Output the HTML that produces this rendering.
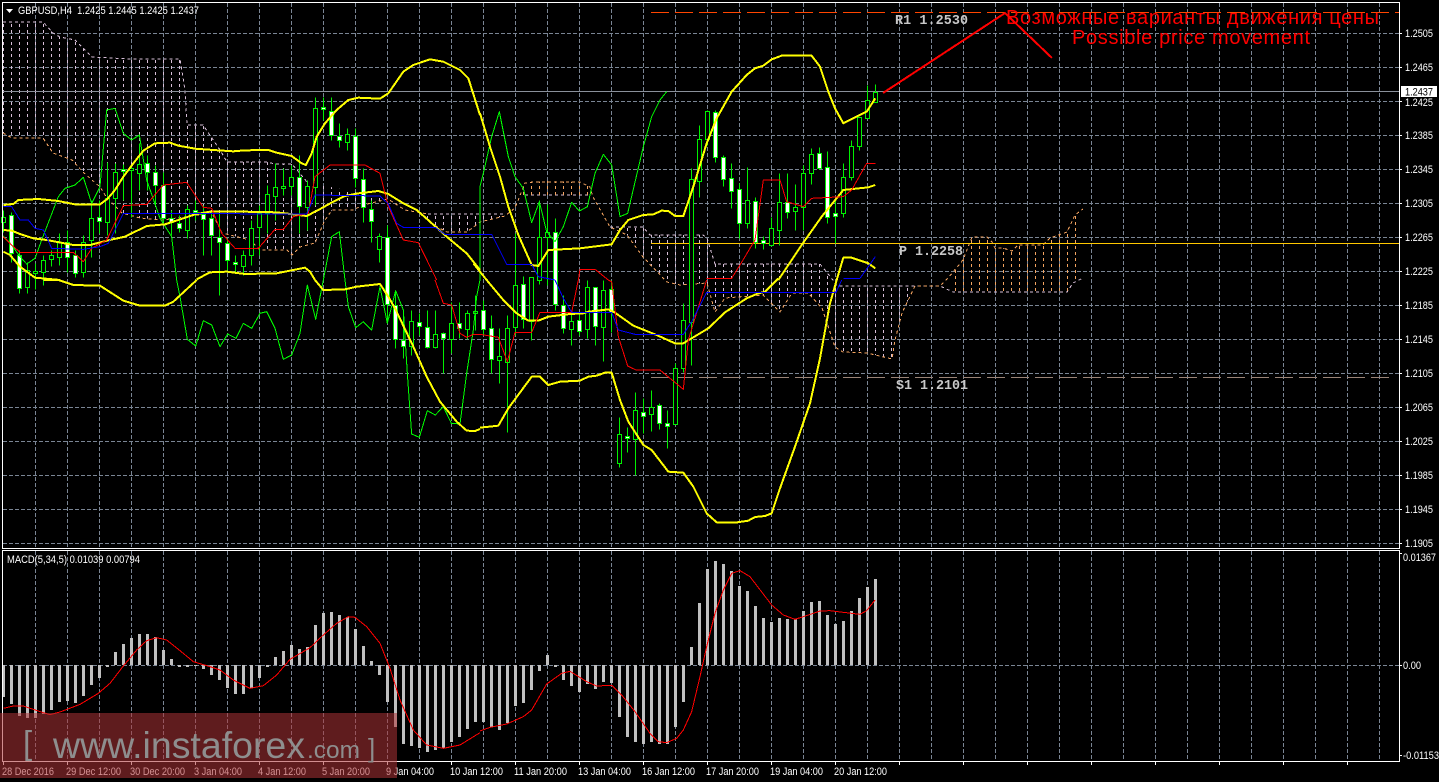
<!DOCTYPE html>
<html><head><meta charset="utf-8"><title>GBPUSD,H4</title>
<style>
html,body{margin:0;padding:0;background:#000;width:1439px;height:782px;overflow:hidden}
svg{display:block;position:absolute;left:0;top:0}
polyline{vector-effect:non-scaling-stroke;fill:none;stroke-linejoin:round;shape-rendering:crispEdges}
text{font-family:"Liberation Sans",sans-serif}
.a{font-size:11px;fill:#fff}
.t{font-size:11px;fill:#fff}
.p{font-family:"Liberation Mono",monospace;font-size:13.4px;font-weight:bold;fill:#c8c8c8}
</style></head><body>
<svg width="1439" height="782" viewBox="0 0 1439 782" xmlns="http://www.w3.org/2000/svg">
<defs>
<clipPath id="c1"><polygon points="3,22 43,22 53,33 60,37 75,40 92,57 130,59 180,59 185,90 187,125 203,125 220,150 227,162 267,162 275,164 292,164 307,182 388,199 363,205 353,210 332,210 325,220 315,243 300,247 292,255 287,250 260,250 250,240 222,233 212,213 163,220 140,218 122,213 107,198 100,187 83,172 72,160 53,153 43,138 12,138 3,133"/></clipPath>
<clipPath id="c2"><polygon points="388,199 405,210 428,214 505,216 480,222 467,231 447,232 430,223 405,212"/></clipPath>
<clipPath id="c3"><polygon points="505,216 515,208 525,183 533,182 547,181 580,182 590,187 593,197 525,195"/></clipPath>
<clipPath id="c4"><polygon points="610,227 643,227 650,235 703,235 707,238 715,264 820,264 833,280 837,286 915,286 943,286 915,286 902,313 895,340 892,359 867,353 843,352 835,347 822,308 808,293 792,293 780,312 763,295 725,298 715,312 707,283 680,285 667,282 643,257 627,235"/></clipPath>
<clipPath id="c5"><polygon points="948,278 963,260 972,237 987,237 992,242 995,248 1003,248 1012,251 1018,245 1043,245 1050,238 1067,232 1075,215 1083,209 1083,278 1073,283 1067,292 953,292"/></clipPath>
</defs>

<!-- grid -->
<g fill="none" stroke="#7a8594" stroke-width="1" stroke-dasharray="4 2" shape-rendering="crispEdges">
<path d="M3 33.5H1399M3 67.5H1399M3 101.5H1399M3 135.5H1399M3 169.5H1399M3 203.5H1399M3 237.5H1399M3 271.5H1399M3 305.5H1399M3 339.5H1399M3 373.5H1399M3 407.5H1399M3 441.5H1399M3 475.5H1399M3 509.5H1399M3 543.5H1399M3 665.5H1399"/>
<path d="M35.5 3V548M67.5 3V548M99.5 3V548M131.5 3V548M163.5 3V548M195.5 3V548M227.5 3V548M259.5 3V548M291.5 3V548M323.5 3V548M355.5 3V548M387.5 3V548M419.5 3V548M451.5 3V548M483.5 3V548M515.5 3V548M547.5 3V548M579.5 3V548M611.5 3V548M643.5 3V548M675.5 3V548M707.5 3V548M739.5 3V548M771.5 3V548M803.5 3V548M835.5 3V548M867.5 3V548M899.5 3V548M931.5 3V548M963.5 3V548M995.5 3V548M1027.5 3V548M1059.5 3V548M1091.5 3V548M1123.5 3V548M1155.5 3V548M1187.5 3V548M1219.5 3V548M1251.5 3V548M1283.5 3V548M1315.5 3V548M1347.5 3V548M1379.5 3V548"/>
<path d="M35.5 551V761M67.5 551V761M99.5 551V761M131.5 551V761M163.5 551V761M195.5 551V761M227.5 551V761M259.5 551V761M291.5 551V761M323.5 551V761M355.5 551V761M387.5 551V761M419.5 551V761M451.5 551V761M483.5 551V761M515.5 551V761M547.5 551V761M579.5 551V761M611.5 551V761M643.5 551V761M675.5 551V761M707.5 551V761M739.5 551V761M771.5 551V761M803.5 551V761M835.5 551V761M867.5 551V761M899.5 551V761M931.5 551V761M963.5 551V761M995.5 551V761M1027.5 551V761M1059.5 551V761M1091.5 551V761M1123.5 551V761M1155.5 551V761M1187.5 551V761M1219.5 551V761M1251.5 551V761M1283.5 551V761M1315.5 551V761M1347.5 551V761M1379.5 551V761"/>
</g>

<!-- cloud -->
<g fill="none" stroke-width="1" stroke-dasharray="3 3" shape-rendering="crispEdges">
<g stroke="#d8bfd8">
<g clip-path="url(#c1)"><path d="M3.5 0V400M11.5 0V400M19.5 0V400M27.5 0V400M35.5 0V400M43.5 0V400M51.5 0V400M59.5 0V400M67.5 0V400M75.5 0V400M83.5 0V400M91.5 0V400M99.5 0V400M107.5 0V400M115.5 0V400M123.5 0V400M131.5 0V400M139.5 0V400M147.5 0V400M155.5 0V400M163.5 0V400M171.5 0V400M179.5 0V400M187.5 0V400M195.5 0V400M203.5 0V400M211.5 0V400M219.5 0V400M227.5 0V400M235.5 0V400M243.5 0V400M251.5 0V400M259.5 0V400M267.5 0V400M275.5 0V400M283.5 0V400M291.5 0V400M299.5 0V400M307.5 0V400M315.5 0V400M323.5 0V400M331.5 0V400M339.5 0V400M347.5 0V400M355.5 0V400M363.5 0V400M371.5 0V400M379.5 0V400"/></g>
<g clip-path="url(#c2)"><path d="M427.5 0V400M435.5 0V400M443.5 0V400M451.5 0V400M459.5 0V400M467.5 0V400M475.5 0V400M483.5 0V400M491.5 0V400M499.5 0V400"/></g>
<g clip-path="url(#c4)"><path d="M611.5 0V400M619.5 0V400M627.5 0V400M635.5 0V400M643.5 0V400M651.5 0V400M659.5 0V400M667.5 0V400M675.5 0V400M683.5 0V400M691.5 0V400M699.5 0V400M707.5 0V400M715.5 0V400M723.5 0V400M731.5 0V400M739.5 0V400M747.5 0V400M755.5 0V400M763.5 0V400M771.5 0V400M779.5 0V400M787.5 0V400M795.5 0V400M803.5 0V400M811.5 0V400M819.5 0V400M827.5 0V400M835.5 0V400M843.5 0V400M851.5 0V400M859.5 0V400M867.5 0V400M875.5 0V400M883.5 0V400M891.5 0V400M899.5 0V400M907.5 0V400"/></g>
<path d="M3 22H43L53 33 60 37 75 40 92 57 130 59H180L185 90 187 125H203L220 150 227 162H267L275 164H292L307 182"/>
<path d="M428 214H505"/>
<path d="M525 195H590"/>
<path d="M610 227H643L650 235H703L707 238 715 264H820L833 280 837 286H940L953 292H1067L1073 283 1083 278"/>
</g>
<g stroke="#f4a460">
<g clip-path="url(#c3)"><path d="M515.5 0V400M523.5 0V400M531.5 0V400M539.5 0V400M547.5 0V400M555.5 0V400M563.5 0V400M571.5 0V400M579.5 0V400M587.5 0V400"/></g>
<g clip-path="url(#c5)"><path d="M955.5 0V400M963.5 0V400M971.5 0V400M979.5 0V400M987.5 0V400M995.5 0V400M1003.5 0V400M1011.5 0V400M1019.5 0V400M1027.5 0V400M1035.5 0V400M1043.5 0V400M1051.5 0V400M1059.5 0V400M1067.5 0V400M1075.5 0V400M1083.5 0V400"/></g>
<path d="M3 133L12 138H43L53 153 72 160 83 172 100 187 107 198 122 213 140 218 163 220 212 213 222 233 250 240 260 250H287L292 255 300 247 315 243 325 220 332 210H353L363 205 388 199 405 210 428 214"/>
<path d="M430 223L447 232H467L480 222 505 216 515 208 525 183 533 182H580L590 187 593 197 610 227 627 235 643 257 667 282 680 285 707 283 715 312 725 298 763 295 780 312 792 293H808L822 308 835 347 843 352 867 353 892 359 895 340 902 313 915 286H940L948 278 963 260 972 237H987L992 242 995 248H1003L1012 251 1018 245H1043L1050 238 1067 232 1075 215 1083 209"/>
</g>
</g>

<!-- price lines -->
<g shape-rendering="crispEdges" fill="none">
<path d="M3 91.5H1399" stroke="#8a909a"/>
<path d="M651 243.5H1399" stroke="#ffc800"/>
<path d="M651 12.5H1399" stroke="#ff4500" stroke-dasharray="18 6"/>
<path d="M651 377.5H1395" stroke="#9a8478" stroke-dasharray="18 6"/>
</g>

<!-- candles -->
<g transform="translate(.5,.5)" shape-rendering="crispEdges">
<path fill="none" stroke="#00f000" d="M3 210V232M11 212V262M19 250V293M27 262V293M35 263V289M43 255V285M51 250V266M59 233V265M67 230V272M75 250V277M83 235V277M91 200V257M99 200V233M107 162V235M115 163V233M123 164V200M131 167V217M139 143V190M147 155V190M155 165V205M163 172V222M171 210V235M179 215V232M187 205V238M195 200V220M203 205V255M211 210V255M219 213V295M227 238V270M235 255V272M243 250V275M251 220V265M259 205V255M267 185V233M275 163V220M283 168V195M291 165V195M299 155V233M307 180V230M315 97V205M323 97V120M331 97V140M339 123V147M347 128V150M355 128V187M363 168V222M371 200V242M379 233V262M387 225V320M395 290V348M403 310V358M411 310V355M419 313V335M427 310V348M435 310V348M443 332V373M451 302V353M459 302V338M467 310V339M475 295V330M483 300V335M491 315V373M499 328V383M507 315V432M515 233V335M523 276V328M531 277V340M539 200V284M547 204V285M555 218V310M563 295V333M571 310V345M579 312V335M587 280V338M595 287V345M603 280V361M611 280V332M619 417V467M627 427V452M635 392V475M643 398V433M651 390V431M659 403V429M667 410V448M675 363V424M683 303V372M691 168V365M699 125V197M707 110V145M715 110V162M723 155V186M731 163V208M739 183V238M747 167V228M755 197V248M763 236V249M771 217V246M779 173V245M787 173V218M795 184V230M803 165V230M811 148V184M819 147V169M827 151V223M835 200V243M843 163V217M851 140V180M859 117V150M867 85V118M875 84V102"/>
<path fill="#000" stroke="#00f000" d="M1 217h4v5h-4zM25 270h4v17h-4zM33 271h4v2h-4zM41 260h4v12h-4zM49 255h4v4h-4zM57 242h4v15h-4zM81 242h4v30h-4zM89 218h4v22h-4zM105 198h4v24h-4zM113 172h4v26h-4zM129 168h4v2h-4zM137 164h4v9h-4zM185 209h4v21h-4zM241 255h4v11h-4zM249 228h4v27h-4zM257 213h4v14h-4zM265 194h4v19h-4zM273 187h4v9h-4zM281 186h4v2h-4zM289 177h4v9h-4zM305 186h4v21h-4zM313 108h4v79h-4zM345 134h4v8h-4zM377 236h4v13h-4zM409 321h4v25h-4zM433 334h4v13h-4zM449 323h4v16h-4zM465 313h4v16h-4zM473 311h4v2h-4zM497 356h4v4h-4zM505 328h4v34h-4zM513 285h4v42h-4zM529 277h4v44h-4zM537 237h4v43h-4zM545 232h4v5h-4zM569 321h4v8h-4zM585 287h4v42h-4zM601 290h4v37h-4zM617 434h4v29h-4zM633 410h4v29h-4zM649 407h4v7h-4zM673 368h4v56h-4zM681 320h4v48h-4zM689 179h4v143h-4zM697 139h4v42h-4zM705 111h4v28h-4zM745 200h4v23h-4zM769 228h4v17h-4zM777 202h4v28h-4zM793 207h4v4h-4zM801 173h4v34h-4zM809 154h4v19h-4zM841 177h4v36h-4zM849 146h4v31h-4zM857 117h4v29h-4zM865 100h4v18h-4zM873 92h4v10h-4z"/>
<path fill="#fff" stroke="#00f000" d="M9 215h4v38h-4zM17 255h4v33h-4zM65 242h4v15h-4zM73 255h4v18h-4zM97 217h4v4h-4zM121 169h4v2h-4zM145 163h4v9h-4zM153 172h4v13h-4zM161 185h4v33h-4zM169 218h4v4h-4zM177 223h4v5h-4zM193 210h4v2h-4zM201 214h4v5h-4zM209 218h4v17h-4zM217 237h4v5h-4zM225 243h4v17h-4zM233 262h4v2h-4zM297 177h4v29h-4zM321 107h4v2h-4zM329 111h4v24h-4zM337 136h4v4h-4zM353 136h4v42h-4zM361 179h4v28h-4zM369 209h4v12h-4zM385 237h4v67h-4zM393 305h4v34h-4zM401 340h4v6h-4zM417 322h4v4h-4zM425 327h4v20h-4zM441 333h4v5h-4zM457 323h4v5h-4zM481 310h4v19h-4zM489 328h4v31h-4zM521 284h4v35h-4zM553 232h4v72h-4zM561 305h4v23h-4zM577 320h4v11h-4zM593 287h4v39h-4zM609 289h4v23h-4zM625 436h4v2h-4zM641 412h4v4h-4zM657 405h4v18h-4zM665 423h4v3h-4zM713 112h4v45h-4zM721 157h4v22h-4zM729 178h4v13h-4zM737 189h4v34h-4zM753 201h4v41h-4zM761 240h4v3h-4zM785 202h4v10h-4zM817 153h4v15h-4zM825 167h4v50h-4zM833 213h4v3h-4z"/>
</g>

<!-- indicators -->
<!-- chikou (green) -->
<g stroke="#00ff00" stroke-width="1">
<polyline transform="scale(.33333)" points="10,708 35,735 60,770 80,792 105,775 125,720 175,590 195,565 225,555 250,532 275,610 300,560 320,330 345,325 370,400 395,420 418,405 440,540 480,655 515,710 530,840"/>
<polyline transform="translate(0 280) scale(.33333)" points="530,0 540,50 562,178 587,198 610,122 635,135 660,200 683,162 708,175 730,130 755,145 780,100 800,95 825,145 850,238 875,225 900,160 922,15 947,118 970,0"/>
<polyline transform="scale(.33333)" points="970,840 995,710 1018,695 1035,840"/>
<polyline transform="translate(0 280) scale(.33333)" points="1035,0 1045,80 1067,143 1090,125 1115,150 1140,20 1162,130 1187,32 1210,90 1222,280 1235,462 1258,472 1282,392 1306,405 1330,380 1354,430 1380,432 1400,280 1420,150 1430,50 1440,0"/>
<polyline transform="translate(480 0) scale(.33333)" points="0,840 0,560 10,520 35,410 58,335 85,470 105,530 130,565 155,668 178,605 200,695 225,725 250,680 275,607 298,633 322,620 345,520 370,463 395,495 420,650 443,640 490,440 515,350 540,300 560,275"/>
</g>
<!-- bollinger (yellow) -->
<g stroke="#ffff00" stroke-width="2">
<polyline transform="scale(.33333)" points="10,615 40,612 55,600 115,597 175,603 225,613 300,613 322,597 345,570 370,530 400,490 430,452 465,430 510,428 535,437 585,446 640,450 700,454 735,451 805,450 830,458 875,468 905,490 918,495 935,460 950,410 975,370 1010,330 1045,300 1075,293 1140,296 1165,280 1210,215 1240,195 1290,178 1330,185 1380,210 1405,235 1440,345"/>
<polyline transform="translate(480 0) scale(.33333)" points="0,340 30,440 60,530 85,620 115,705 155,795 175,798 205,750 300,745 395,733 420,690 445,660 490,645 520,643 545,632 565,633 585,648 610,648 640,560 680,430 710,355 755,275 800,225 825,205 850,197 875,178 905,167 995,167 1020,200 1045,275 1065,325 1090,370 1135,347 1160,335 1186,295"/>
<polyline transform="scale(.33333)" points="10,690 35,692 60,702 100,715 140,720 220,735 270,735 320,722 375,710 440,678 495,673 550,655 585,643 630,635 730,635 830,637 920,648 955,630 1000,605 1035,588 1075,580 1135,573 1165,582 1210,610 1250,630 1290,665 1340,710 1400,760 1440,810"/>
<polyline transform="translate(480 280) scale(.33333)" points="-20,-50 20,0 70,60 110,100 145,122 175,122 205,110 270,102 310,100 325,95 385,88 405,98 460,137 530,165 585,190 610,190 640,172 685,145 735,97 800,55 830,42 855,35 885,5 895,-5"/>
<polyline transform="translate(480 0) scale(.33333)" points="895,840 965,735 1025,650 1090,570 1165,562 1186,555"/>
<polyline transform="scale(.33333)" points="10,755 30,765 60,800 105,833 180,840"/>
<polyline transform="translate(0 280) scale(.33333)" points="130,0 175,0 220,15 300,17 370,62 420,77 495,77 520,65 590,0"/>
<polyline transform="scale(.33333)" points="590,838 630,817 680,815 735,822 830,820 915,803 930,815 945,840"/>
<polyline transform="translate(0 280) scale(.33333)" points="945,0 970,30 1035,28 1070,20 1140,12 1165,50 1185,85 1240,200 1280,290 1320,365 1370,425 1400,452 1425,453 1440,447"/>
<polyline transform="translate(480 280) scale(.33333)" points="0,443 55,437 85,385 155,290 180,290 205,315 240,305 300,302 325,290 350,287 375,278 395,278 420,360 445,425 490,495 515,510 565,575 610,578 640,620 680,700 710,727 765,728 805,722 825,711 855,708 875,700 900,625 945,500 990,370 1020,235 1050,70 1070,0"/>
<polyline transform="translate(480 0) scale(.33333)" points="1070,840 1090,773 1115,773 1165,790 1186,805"/>
</g>
<!-- tenkan (red) -->
<g stroke="#ff0000" stroke-width="1">
<polyline transform="scale(.33333)" points="10,710 35,735 60,757 220,757 250,785 275,745 320,720 370,617 440,613 490,555 560,547 610,622 635,625 665,700 705,745 775,745 825,688 850,688 880,650 925,640 945,530 990,495 1095,495 1140,520 1165,620 1210,720 1255,728 1310,840"/>
<polyline transform="translate(0 280) scale(.33333)" points="1305,0 1330,70 1355,75 1380,160 1400,172 1420,163 1440,163"/>
<polyline transform="translate(480 280) scale(.33333)" points="0,163 55,172 82,245 105,157 155,157 180,97 275,97 295,0"/>
<polyline transform="translate(480 0) scale(.33333)" points="295,840 300,808 345,808 385,840"/>
<polyline transform="translate(480 280) scale(.33333)" points="385,0 395,5 415,170 443,258 468,270 540,270 610,328 625,180 680,0"/>
<polyline transform="translate(480 0) scale(.33333)" points="680,835 755,835 780,795 825,720 850,540 900,540 920,605 970,620 995,595 1090,590 1115,570 1160,490 1186,490"/>
</g>
<!-- kijun (blue) -->
<g stroke="#0000ff" stroke-width="1">
<polyline transform="scale(.33333)" points="10,620 35,620 60,660 85,660 105,685 130,690 155,745 250,748 300,740 325,730 370,640 920,642 945,585 1140,588 1165,612 1190,670 1210,682 1305,682 1335,703 1440,703"/>
<polyline transform="translate(480 0) scale(.33333)" points="0,703 35,703 80,793 155,793 175,830 225,840"/>
<polyline transform="translate(480 280) scale(.33333)" points="225,0 250,55 275,97 395,97 415,150 465,163 610,163 635,125 680,37 1068,37 1085,0"/>
<polyline transform="translate(480 0) scale(.33333)" points="1090,835 1140,835 1186,770"/>
</g>

<!-- macd -->
<path transform="translate(.5,0)" fill="none" stroke="#c0c0c0" stroke-width="3" shape-rendering="crispEdges" d="M3 665V697M11 665V704M19 665V716M27 665V718M35 665V718M43 665V714M51 665V710M59 665V702M67 665V701M75 665V703M83 665V696M91 665V685M99 665V678M107 665V667M115 665V652M123 665V644M131 665V638M139 665V634M147 665V634M155 665V637M163 665V650M171 665V659M179 665V667M187 665V667M195 665V666M203 665V669M211 665V675M219 665V680M227 665V688M235 665V694M243 665V694M251 665V688M259 665V678M267 665V667M275 665V657M283 665V651M291 665V645M299 665V649M307 665V647M315 665V625M323 665V613M331 665V612M339 665V615M347 665V617M355 665V629M363 665V646M371 665V661M379 665V675M387 665V702M395 665V727M403 665V744M411 665V746M419 665V748M427 665V752M435 665V750M443 665V748M451 665V742M459 665V737M467 665V729M475 665V722M483 665V722M491 665V727M499 665V730M507 665V723M515 665V706M523 665V703M531 665V690M539 665V671M547 665V655M555 665V667M563 665V680M571 665V686M579 665V692M587 665V684M595 665V689M603 665V682M611 665V683M619 665V717M627 665V737M635 665V742M643 665V744M651 665V742M659 665V744M667 665V744M675 665V727M683 665V702M691 665V647M699 665V603M707 665V569M715 665V561M723 665V564M731 665V571M739 665V586M747 665V591M755 665V606M763 665V618M771 665V622M779 665V618M787 665V619M795 665V619M803 665V611M811 665V602M819 665V601M827 665V615M835 665V624M843 665V621M851 665V611M859 665V598M867 665V587M875 665V579"/>
<g stroke="#ff0000" stroke-width="1">
<polyline transform="translate(0 540) scale(.33333)" points="10,505 40,498 70,498 100,508 130,518 150,524 180,516 240,493 295,460 330,430 370,378 410,330 440,302 470,293 500,300 540,332 580,365 630,380 660,390 700,420 750,445 790,437 830,405 870,358 930,323 970,285 1010,250 1045,230 1065,232 1100,260 1140,310 1170,385 1200,480 1240,570 1280,615 1330,625 1380,615 1440,578"/>
<polyline transform="translate(480 540) scale(.33333)" points="0,573 30,562 80,552 130,530 155,510 200,432 245,400 270,394 320,425 350,438 395,436 425,465 465,515 510,580 535,605 560,608 590,595 610,570 635,515 660,410 680,320 705,220 730,150 755,100 780,92 810,110 875,195 910,225 945,238 985,225 1020,213 1050,212 1090,217 1140,223 1160,212 1185,180"/>
</g>

<!-- frame -->
<path fill="none" stroke="#fff" stroke-width="1" shape-rendering="crispEdges" d="M2.5 2.5H1399.5V548.5H2.5ZM2.5 550.5H1399.5V761.5H2.5Z"/>
<path fill="none" stroke="#fff" stroke-width="1" shape-rendering="crispEdges" d="M1399 33.5h3M1399 67.5h3M1399 101.5h3M1399 135.5h3M1399 169.5h3M1399 203.5h3M1399 237.5h3M1399 271.5h3M1399 305.5h3M1399 339.5h3M1399 373.5h3M1399 407.5h3M1399 441.5h3M1399 475.5h3M1399 509.5h3M1399 543.5h3M1399 553.5h3M1399 665.5h3M1399 755.5h3M3.5 761v4M67.5 761v4M131.5 761v4M195.5 761v4M259.5 761v4M323.5 761v4M387.5 761v4M451.5 761v4M515.5 761v4M579.5 761v4M643.5 761v4M707.5 761v4M771.5 761v4M835.5 761v4M899.5 761v4M963.5 761v4M1027.5 761v4M1091.5 761v4M1155.5 761v4M1219.5 761v4M1283.5 761v4M1347.5 761v4"/>

<!-- title -->
<path d="M6 9h7l-3.5 4z" fill="#fff"/>
<text class="t" x="18" y="14" textLength="181" lengthAdjust="spacingAndGlyphs" xml:space="preserve">GBPUSD,H4  1.2425 1.2445 1.2425 1.2437</text>
<text class="t" x="7" y="563" textLength="133" lengthAdjust="spacingAndGlyphs">MACD(5,34,5) 0.01039 0.00794</text>

<!-- price axis -->
<g>
<text class="a" x="1405" y="37" textLength="28" lengthAdjust="spacingAndGlyphs">1.2505</text>
<text class="a" x="1405" y="71" textLength="28" lengthAdjust="spacingAndGlyphs">1.2465</text>
<text class="a" x="1405" y="106" textLength="28" lengthAdjust="spacingAndGlyphs">1.2425</text>
<text class="a" x="1405" y="139" textLength="28" lengthAdjust="spacingAndGlyphs">1.2385</text>
<text class="a" x="1405" y="173" textLength="28" lengthAdjust="spacingAndGlyphs">1.2345</text>
<text class="a" x="1405" y="207" textLength="28" lengthAdjust="spacingAndGlyphs">1.2305</text>
<text class="a" x="1405" y="241" textLength="28" lengthAdjust="spacingAndGlyphs">1.2265</text>
<text class="a" x="1405" y="275" textLength="28" lengthAdjust="spacingAndGlyphs">1.2225</text>
<text class="a" x="1405" y="309" textLength="28" lengthAdjust="spacingAndGlyphs">1.2185</text>
<text class="a" x="1405" y="343" textLength="28" lengthAdjust="spacingAndGlyphs">1.2145</text>
<text class="a" x="1405" y="377" textLength="28" lengthAdjust="spacingAndGlyphs">1.2105</text>
<text class="a" x="1405" y="411" textLength="28" lengthAdjust="spacingAndGlyphs">1.2065</text>
<text class="a" x="1405" y="445" textLength="28" lengthAdjust="spacingAndGlyphs">1.2025</text>
<text class="a" x="1405" y="479" textLength="28" lengthAdjust="spacingAndGlyphs">1.1985</text>
<text class="a" x="1405" y="513" textLength="28" lengthAdjust="spacingAndGlyphs">1.1945</text>
<text class="a" x="1405" y="547" textLength="28" lengthAdjust="spacingAndGlyphs">1.1905</text>
<text class="a" x="1403" y="561" textLength="33" lengthAdjust="spacingAndGlyphs">0.01367</text>
<text class="a" x="1403" y="669" textLength="18" lengthAdjust="spacingAndGlyphs">0.00</text>
<text class="a" x="1403" y="759" textLength="36" lengthAdjust="spacingAndGlyphs">-0.01153</text>
</g>
<rect x="1401" y="86" width="36" height="11" fill="#fff"/>
<text x="1405" y="95.500" font-size="11" fill="#000" textLength="28" lengthAdjust="spacingAndGlyphs">1.2437</text>

<!-- pivots -->
<text class="p" x="895" y="24" textLength="73" lengthAdjust="spacing">R1 1.2530</text>
<text class="p" x="899" y="255" textLength="64" lengthAdjust="spacing">P 1.2258</text>
<text class="p" x="896" y="389" textLength="72" lengthAdjust="spacing">S1 1.2101</text>

<!-- arrow -->
<path d="M883 93L1005 13 1052 58" fill="none" stroke="#f00" stroke-width="2" shape-rendering="crispEdges"/>
<text x="1006" y="24" font-size="20" fill="#f00" textLength="373" lengthAdjust="spacing">Возможные варианты движения цены</text>
<text x="1072" y="44" font-size="20" fill="#f00" textLength="238" lengthAdjust="spacing">Possible price movement</text>

<!-- time axis -->
<g>
<text class="t" x="2" y="775" textLength="52" lengthAdjust="spacingAndGlyphs">28 Dec 2016</text>
<text class="t" x="66" y="775" textLength="55" lengthAdjust="spacingAndGlyphs">29 Dec 12:00</text>
<text class="t" x="130" y="775" textLength="55" lengthAdjust="spacingAndGlyphs">30 Dec 20:00</text>
<text class="t" x="194" y="775" textLength="48" lengthAdjust="spacingAndGlyphs">3 Jan 04:00</text>
<text class="t" x="258" y="775" textLength="48" lengthAdjust="spacingAndGlyphs">4 Jan 12:00</text>
<text class="t" x="322" y="775" textLength="48" lengthAdjust="spacingAndGlyphs">5 Jan 20:00</text>
<text class="t" x="386" y="775" textLength="48" lengthAdjust="spacingAndGlyphs">9 Jan 04:00</text>
<text class="t" x="450" y="775" textLength="53" lengthAdjust="spacingAndGlyphs">10 Jan 12:00</text>
<text class="t" x="514" y="775" textLength="53" lengthAdjust="spacingAndGlyphs">11 Jan 20:00</text>
<text class="t" x="578" y="775" textLength="53" lengthAdjust="spacingAndGlyphs">13 Jan 04:00</text>
<text class="t" x="642" y="775" textLength="53" lengthAdjust="spacingAndGlyphs">16 Jan 12:00</text>
<text class="t" x="706" y="775" textLength="53" lengthAdjust="spacingAndGlyphs">17 Jan 20:00</text>
<text class="t" x="770" y="775" textLength="53" lengthAdjust="spacingAndGlyphs">19 Jan 04:00</text>
<text class="t" x="834" y="775" textLength="53" lengthAdjust="spacingAndGlyphs">20 Jan 12:00</text>
</g>

<!-- watermark -->
<rect x="0" y="713" width="397" height="65" fill="#ad3337" fill-opacity=".55"/>
<g fill="#8e8e8e">
<text x="23" y="754" font-size="33">[</text>
<text x="53" y="758" font-size="37" textLength="252" lengthAdjust="spacingAndGlyphs">www.instaforex</text>
<text x="307" y="758" font-size="24.500" textLength="53" lengthAdjust="spacingAndGlyphs">.com</text>
<text x="368" y="757" font-size="26">]</text>
</g>
</svg>
</body></html>
